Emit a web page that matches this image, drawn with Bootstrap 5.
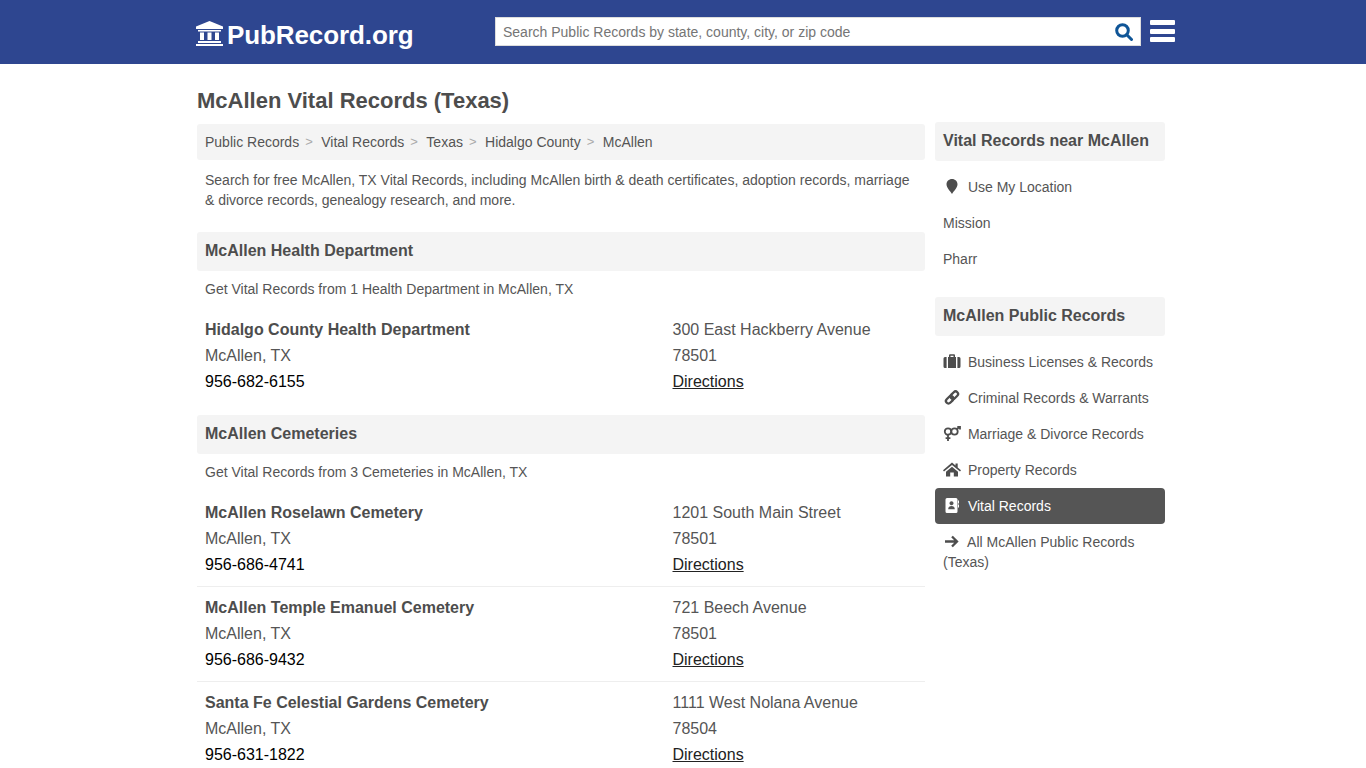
<!DOCTYPE html>
<html lang="en">
<head>
<meta charset="UTF-8">
<title>McAllen Vital Records (Texas)</title>
<link href="https://cdn.jsdelivr.net/npm/bootstrap@5.3.0/dist/css/bootstrap.min.css" rel="stylesheet">
<style>
  body { font-family: "Liberation Sans", Arial, sans-serif; color: #555; font-size: 14px; line-height: 20px; background: #fff; }
  .top-bar { background: #2e4690; height: 64px; }
  .top-inner { width: 1000px; margin: 0 auto; height: 64px; position: relative; }
  .logo-link { left: 13px; top: 0; color: #fff; font-size: 26px; font-weight: 700; text-decoration: none; line-height: 70px; gap: 4px; letter-spacing: -.1px; }
  .logo-link svg { width: 27px; height: 25px; margin-top: 21px; }
  .search-box { left: 312px; top: 17px; width: 646px; height: 29px; background: #fff; border: 1px solid #ddd; }
  .search-box input { border: 0; outline: 0; flex: 1; padding: 0 7px; font-size: 14px; color: #555; background: transparent; min-width: 0; }
  .search-box input::placeholder { color: #757575; opacity: 1; }
  .search-box svg { width: 18px; height: 18px; margin-right: 7px; }
  .burger-btn { left: 967px; top: 20px; width: 25px; }
  .burger-btn span { display: block; height: 5px; background: #fff; margin-bottom: 3.5px; border-radius: 1px; }
  .page-wrap { width: 972px; padding-right: 4px; margin: 0 auto; }
  .page-title { font-size: 22px; font-weight: 700; line-height: 26px; color: #4d4d4d; margin: 24px 0 10px; }
  .main-col { width: 728px; }
  .side-col { width: 230px; margin-top: -2px; }
  .crumbs { background: #f4f4f4; height: 36px; border-radius: 3px; padding: 0 8px; margin-bottom: 10px; }
  .crumbs a { color: #555; text-decoration: none; }
  .crumbs i { font-style: normal; color: #aaa; margin: 0 8.5px 0 6px; font-size: 13px; }
  .intro-text { padding: 0 8px; margin: 0 0 22px; }
  .sec-head { background: #f4f4f4; height: 39px; line-height: 37px; border-radius: 3px; padding: 0 8px; font-size: 16px; font-weight: 700; color: #4d4d4d; margin: 0; }
  .sec-note { padding: 0 8px; margin: 8px 0 18px; }
  .place-row { padding: 0 8px; font-size: 16px; line-height: 26px; display: flex; }
  .place-row + .place-row { border-top: 1px solid #eee; margin-top: 8px; padding-top: 8px; }
  .place-left { width: 467.5px; }
  .place-name { font-weight: 700; color: #4d4d4d; }
  .phone-line { color: #000; }
  .dir-link { color: #222; text-decoration: underline; }
  .place-group { margin-bottom: 20px; }
  .side-head { background: #f4f4f4; height: 39px; line-height: 37px; border-radius: 3px; padding: 0 8px; font-size: 16px; font-weight: 700; color: #4d4d4d; margin: 0 0 8px; }
  .side-item { display: block; padding: 8px; color: #555; text-decoration: none; border-radius: 4px; }
  .side-item svg { width: 18px; height: 15px; margin-right: 3px; vertical-align: -2px; fill: #4d4d4d; }
  .side-item .line-icon { fill: none; stroke: #4d4d4d; }
  .side-item.is-on { background: #555; color: #fff; }
  .side-item.is-on svg { fill: #fff; }
  .side-gap { margin-bottom: 20px; }
</style>
</head>
<body>

<div class="top-bar">
  <div class="top-inner">
    <a class="logo-link position-absolute d-flex" href="#">
      <svg viewBox="0 0 27 25" fill="#fff"><path d="M13.5 0 L27 5.5 V8 H0 V5.5 Z M2 9 H25 V10.5 H2 Z M4 11.5 H8 V19 H4 Z M11.5 11.5 H15.5 V19 H11.5 Z M19 11.5 H23 V19 H19 Z M2 20 H25 V22 H2 Z M0 23 H27 V25 H0 Z"/></svg>
      <span>PubRecord.org</span>
    </a>
    <div class="search-box d-flex align-items-center position-absolute">
      <input type="text" placeholder="Search Public Records by state, county, city, or zip code">
      <svg viewBox="0 0 18 18" fill="none" stroke="#0f5597" stroke-width="3"><circle cx="7.5" cy="7.5" r="5.8"/><path d="M11.8 11.8 L16.5 16.5" stroke-linecap="round"/></svg>
    </div>
    <div class="burger-btn position-absolute"><span></span><span></span><span></span></div>
  </div>
</div>

<div class="page-wrap">
  <h1 class="page-title">McAllen Vital Records (Texas)</h1>
  <div class="d-flex justify-content-between">
    <div class="main-col">
      <div class="crumbs d-flex align-items-center">
        <a href="#">Public Records</a><i>&gt;</i>
        <a href="#">Vital Records</a><i>&gt;</i>
        <a href="#">Texas</a><i>&gt;</i>
        <a href="#">Hidalgo County</a><i>&gt;</i>
        <a href="#">McAllen</a>
      </div>
      <p class="intro-text">Search for free McAllen, TX Vital Records, including McAllen birth &amp; death certificates, adoption records, marriage &amp; divorce records, genealogy research, and more.</p>

      <h2 class="sec-head">McAllen Health Department</h2>
      <p class="sec-note">Get Vital Records from 1 Health Department in McAllen, TX</p>
      <div class="place-group">
        <div class="place-row">
          <div class="place-left"><div class="place-name">Hidalgo County Health Department</div><div>McAllen, TX</div><div class="phone-line">956-682-6155</div></div>
          <div><div>300 East Hackberry Avenue</div><div>78501</div><a class="dir-link" href="#">Directions</a></div>
        </div>
      </div>

      <h2 class="sec-head">McAllen Cemeteries</h2>
      <p class="sec-note">Get Vital Records from 3 Cemeteries in McAllen, TX</p>
      <div class="place-group">
        <div class="place-row">
          <div class="place-left"><div class="place-name">McAllen Roselawn Cemetery</div><div>McAllen, TX</div><div class="phone-line">956-686-4741</div></div>
          <div><div>1201 South Main Street</div><div>78501</div><a class="dir-link" href="#">Directions</a></div>
        </div>
        <div class="place-row">
          <div class="place-left"><div class="place-name">McAllen Temple Emanuel Cemetery</div><div>McAllen, TX</div><div class="phone-line">956-686-9432</div></div>
          <div><div>721 Beech Avenue</div><div>78501</div><a class="dir-link" href="#">Directions</a></div>
        </div>
        <div class="place-row">
          <div class="place-left"><div class="place-name">Santa Fe Celestial Gardens Cemetery</div><div>McAllen, TX</div><div class="phone-line">956-631-1822</div></div>
          <div><div>1111 West Nolana Avenue</div><div>78504</div><a class="dir-link" href="#">Directions</a></div>
        </div>
      </div>
    </div>

    <div class="side-col">
      <h3 class="side-head">Vital Records near McAllen</h3>
      <div class="side-gap">
        <a class="side-item" href="#"><svg viewBox="0 0 18 15"><path d="M9 0 C12.2 0 14.5 2.3 14.5 5.3 C14.5 8.5 11 12 9 15 C7 12 3.5 8.5 3.5 5.3 C3.5 2.3 5.8 0 9 0 Z"/></svg> Use My Location</a>
        <a class="side-item" href="#">Mission</a>
        <a class="side-item" href="#">Pharr</a>
      </div>
      <h3 class="side-head">McAllen Public Records</h3>
      <a class="side-item" href="#"><svg viewBox="0 0 18 15"><path d="M2 3 H3.6 V14 H2 A1.5 1.5 0 0 1 .5 12.5 V4.5 A1.5 1.5 0 0 1 2 3 Z M5 3 H6 V1.3 A1 1 0 0 1 7 .3 H11 A1 1 0 0 1 12 1.3 V3 H13 V14 H5 Z M7.5 3 H10.5 V1.8 H7.5 Z M14.4 3 H16 A1.5 1.5 0 0 1 17.5 4.5 V12.5 A1.5 1.5 0 0 1 16 14 H14.4 Z"/></svg> Business Licenses &amp; Records</a>
      <a class="side-item" href="#"><svg class="line-icon" viewBox="0 0 18 15" stroke-width="2.3"><g transform="rotate(-45 9 7.5)"><rect x="1.5" y="5" width="8.5" height="5" rx="2.5"/><rect x="8" y="5" width="8.5" height="5" rx="2.5"/></g></svg> Criminal Records &amp; Warrants</a>
      <a class="side-item" href="#"><svg class="line-icon" viewBox="0 0 18 15" stroke-width="1.8"><circle cx="5" cy="5.5" r="3.2"/><circle cx="11.5" cy="5.5" r="3.2"/><path d="M5 9 V15 M2.6 12.2 H7.4 M14 3 L16.8 .8 M14.3 .9 H17 V3.4"/></svg> Marriage &amp; Divorce Records</a>
      <a class="side-item" href="#"><svg viewBox="0 0 18 15"><path d="M9 .5 L12.5 3.5 V1.5 H14.7 V5.4 L18 8.2 L17 9.4 L9 2.9 L1 9.4 L0 8.2 Z M3 9.8 L9 4.8 L15 9.8 V14.5 H10.8 V10.5 H7.2 V14.5 H3 Z"/></svg> Property Records</a>
      <a class="side-item is-on" href="#"><svg viewBox="0 0 18 15"><path fill-rule="evenodd" d="M4 0 H13 A1.5 1.5 0 0 1 14.5 1.5 V13.5 A1.5 1.5 0 0 1 13 15 H4 A1.5 1.5 0 0 1 2.5 13.5 V1.5 A1.5 1.5 0 0 1 4 0 Z M8.5 3.2 A2 2 0 1 0 8.51 3.2 Z M5.2 11.3 H11.8 C11.8 9 10.4 8 8.5 8 C6.6 8 5.2 9 5.2 11.3 Z"/><path d="M15 2.5 H16 V5.5 H15 Z M15 6.5 H16 V9.5 H15 Z"/></svg> Vital Records</a>
      <a class="side-item" href="#"><svg class="line-icon" viewBox="0 0 18 15" stroke-width="2.3"><path d="M2 7.5 H14 M9 2.5 L14 7.5 L9 12.5"/></svg> All McAllen Public Records (Texas)</a>
    </div>
  </div>
</div>

<script src="https://cdn.jsdelivr.net/npm/bootstrap@5.3.0/dist/js/bootstrap.bundle.min.js"></script>
</body>
</html>
